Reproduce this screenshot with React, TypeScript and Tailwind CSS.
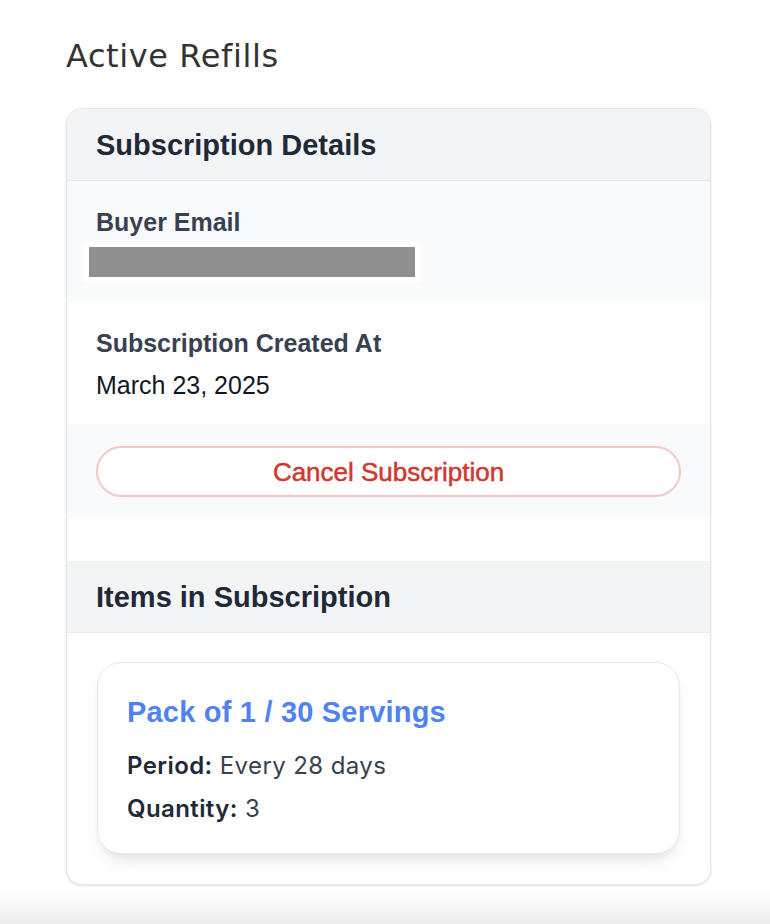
export default function App() {
  const sans = { fontFamily: '"Liberation Sans", Arial, sans-serif' };
  const inter = { fontFamily: 'Inter, "Liberation Sans", sans-serif' };
  return (
    <div className="w-[770px] h-[924px] bg-white overflow-hidden flex flex-col" style={sans}>
      <div className="px-[66px] pt-[36px] flex-1 flex flex-col">
        <h1
          className="text-[32px] leading-[40px] font-normal text-[#333333] tracking-[0.6px]"
          style={{ fontFamily: '"DejaVu Sans", sans-serif' }}
        >
          Active Refills
        </h1>
        <div className="mt-[32px] w-[645px] border border-[#e5e7eb] rounded-[16px] overflow-hidden bg-white shadow-sm">
          <div className="h-[72px] flex items-center px-[29px] bg-[#f3f4f6] border-b border-[#e5e7eb]">
            <h2 className="text-[29px] leading-[36px] font-bold text-[#1f2937]">Subscription Details</h2>
          </div>
          <div className="bg-[#f9fafb] px-[29px] pt-[26px] pb-[20px]">
            <div className="text-[25px] leading-[30px] font-bold text-[#374151]">Buyer Email</div>
            <div className="mt-[5px] ml-[-12px] w-[336px] h-[40px] bg-white p-[5px]">
              <div className="w-full h-full bg-[#8f8f8f]" />
            </div>
          </div>
          <div className="bg-white px-[29px] pt-[26px] pb-[24px]">
            <div className="text-[25px] leading-[30px] font-bold text-[#374151]">Subscription Created At</div>
            <div className="mt-[12px] text-[25px] leading-[30px] text-[#111827]">March 23, 2025</div>
          </div>
          <div className="bg-[#f9fafb] px-[29px] pt-[22px] pb-[21px]">
            <button className="w-full h-[51px] rounded-full border-2 border-[#f6c7c7] bg-white text-[26px] leading-[30px] text-[#d2362e] [-webkit-text-stroke:0.5px_#d2362e] flex items-center justify-center">
              Cancel Subscription
            </button>
          </div>
          <div className="h-[43px] bg-white" />
          <div className="h-[72px] flex items-center px-[29px] bg-[#f3f4f6] border-b border-[#e5e7eb]">
            <h2 className="text-[29px] leading-[36px] font-bold text-[#1f2937]">Items in Subscription</h2>
          </div>
          <div className="px-[30px] pt-[29px] pb-[30px] bg-white">
            <div className="border border-[#e5e7eb] rounded-[24px] bg-white shadow-[0_10px_18px_-6px_rgba(0,0,0,0.12),0_4px_8px_-4px_rgba(0,0,0,0.06)] px-[29px] pt-[31px] pb-[29px]">
              <div className="text-[29px] leading-[36px] font-bold text-[#4f83ef] tracking-[0.2px]">Pack of 1 / 30 Servings</div>
              <div className="mt-[21px] text-[24px] leading-[30px] text-[#374151] tracking-[0.4px]" style={inter}>
                <span className="font-semibold text-[#1f2937]">Period:</span> Every 28 days
              </div>
              <div className="mt-[13px] text-[24px] leading-[30px] text-[#374151] tracking-[0.4px]" style={inter}>
                <span className="font-semibold text-[#1f2937]">Quantity:</span> 3
              </div>
            </div>
          </div>
        </div>
      </div>
      <div className="h-[34px] bg-gradient-to-b from-white to-[#ededed]" />
    </div>
  );
}
